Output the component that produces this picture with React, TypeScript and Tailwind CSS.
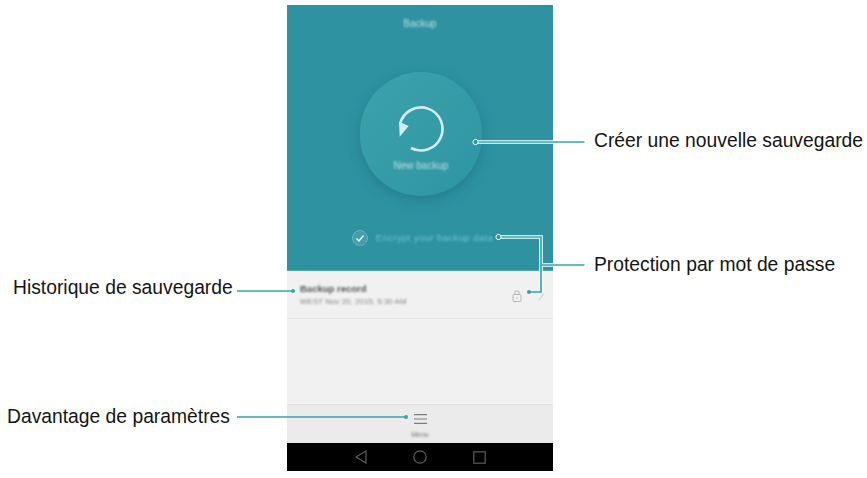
export default function App() {
  const teal = "#2fa8a6";
  return (
    <div className="relative w-[867px] h-[478px] bg-white overflow-hidden font-['Liberation_Sans',Arial,sans-serif] text-[19.3px] text-[#141414]">
      <div className="pt-[5px] w-[266px] ml-[287px] flex flex-col h-[471px]">
        <div className="h-[266px] bg-[#2e92a1] flex flex-col items-center border-b border-[#45aab6]">
          <div className="mt-[13px] text-[10px] leading-[12px] text-[#bfe0e4] blur-[1.3px]">Backup</div>
          <div className="mt-[42px] ml-[2px] w-[122px] h-[124px] rounded-full bg-gradient-to-br from-[#3ca3ad] to-[#2d94a2] shadow-[0_4px_12px_rgba(20,90,105,0.35)] flex flex-col items-center">
            <svg className="mt-[33px]" width="48" height="48" viewBox="0 0 48 48" fill="none">
              <path d="M3.2 18.5 A21.5 21.5 0 1 1 14 43" stroke="#d5eaee" strokeWidth="2.6" />
              <path d="M2 16.7 L11.7 21 L2.7 31.7 Z" fill="#d5eaee" />
            </svg>
            <div className="mt-[7px] text-[10px] leading-[12px] text-[#bfe0e4] blur-[1.3px]">New backup</div>
          </div>
          <div className="mt-[34px] ml-[5px] flex items-center gap-[8px]">
            <div className="w-[16px] h-[16px] rounded-full bg-[#429fac] border border-[#62b6c1] flex items-center justify-center">
              <svg width="10" height="10" viewBox="0 0 10 10" fill="none">
                <path d="M1.5 5.5 L4 8 L8.5 2.5" stroke="#ffffff" strokeWidth="1.3" />
              </svg>
            </div>
            <div className="text-[9.5px] leading-[14px] tracking-[0.4px] text-[#74c3cf] blur-[1px]">Encrypt your backup data</div>
          </div>
        </div>
        <div className="flex-1 bg-[#f1f1f1] flex flex-col">
          <div className="h-[48px] border-b border-[#e4e4e4] pl-[13px] pr-[8px] flex items-center justify-between">
            <div className="pt-[2px]">
              <div className="text-[9.5px] leading-[13px] font-bold text-[#555] blur-[1.1px]">Backup record</div>
              <div className="text-[8px] leading-[14px] text-[#888] blur-[1.1px]">WEST Nov 20, 2015, 5:30 AM</div>
            </div>
            <div className="flex items-center gap-[16px] pt-[2px]">
              <svg width="10" height="12" viewBox="0 0 10 12" fill="none" stroke="#b5b5b5" strokeWidth="1">
                <rect x="1" y="4.5" width="8" height="7" rx="1" />
                <path d="M2.8 4.5 V3 A2.2 2.2 0 0 1 7.2 3 V4.5" />
                <path d="M5 7.2 V8.8" />
              </svg>
              <svg className="mt-[3px]" width="7" height="8" viewBox="0 0 7 8" fill="none" stroke="#d8c4c4" strokeWidth="1">
                <path d="M0.5 7.5 L6 0.5" />
              </svg>
            </div>
          </div>
          <div className="flex-1" />
          <div className="h-[39px] bg-[#ebebeb] border-t border-[#e0e0e0] flex flex-col items-center">
            <svg className="mt-[9px] ml-[1px]" width="13" height="10" viewBox="0 0 13 10" stroke="#7d7d7d" strokeWidth="1.1">
              <path d="M0 0.6 H13 M0 5 H13 M0 9.4 H13" />
            </svg>
            <div className="mt-[6px] text-[7px] leading-[9px] text-[#777] blur-[1px]">Menu</div>
          </div>
          <div className="h-[28px] bg-black flex items-center justify-center gap-[46px]">
            <svg width="12" height="14" viewBox="0 0 12 14" fill="none" stroke="#5d5d5d" strokeWidth="1.2"><path d="M11 1 V13 L1 7 Z" /></svg>
            <svg width="14" height="14" viewBox="0 0 14 14" fill="none" stroke="#5d5d5d" strokeWidth="1.2"><circle cx="7" cy="7" r="6.2" /></svg>
            <svg width="13" height="13" viewBox="0 0 13 13" fill="none" stroke="#5d5d5d" strokeWidth="1.2"><rect x="0.8" y="0.8" width="11.4" height="11.4" /></svg>
          </div>
        </div>
      </div>

      <svg className="absolute left-0 top-0 pointer-events-none" width="867" height="478" viewBox="0 0 867 478" fill="none">
        <path d="M478 142 H553 M501 237 H541 V292 M541 265 H553" stroke="#ffffff" strokeWidth="3.6" />
        <path d="M478 142 H584.5 M500 237 H541 V292 H530 M541 265 H584.5 M237 291 H294 M237 417 H405" stroke={teal} strokeWidth="1.7" />
        <circle cx="475.5" cy="142" r="2.6" fill="#2e92a1" stroke="#ffffff" strokeWidth="1" />
        <circle cx="498.5" cy="237" r="2.6" fill="#2e92a1" stroke="#ffffff" strokeWidth="1" />
        <circle cx="529" cy="292" r="2" fill={teal} />
        <circle cx="293" cy="291" r="2" fill={teal} />
        <circle cx="406" cy="417" r="2" fill={teal} />
      </svg>

      <span className="absolute left-[594px] top-[130px] leading-[22px] whitespace-nowrap">Créer une nouvelle sauvegarde</span>
      <span className="absolute left-[594px] top-[254px] leading-[22px] whitespace-nowrap">Protection par mot de passe</span>
      <span className="absolute left-[13px] top-[277px] leading-[22px] whitespace-nowrap">Historique de sauvegarde</span>
      <span className="absolute left-[7px] top-[406px] leading-[22px] whitespace-nowrap">Davantage de paramètres</span>
    </div>
  );
}
